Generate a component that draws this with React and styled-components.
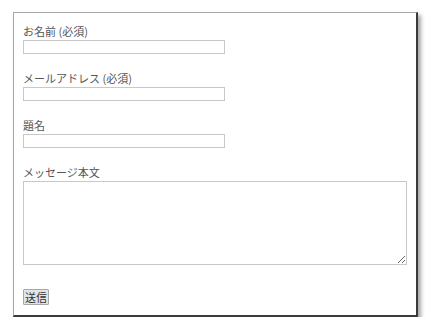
import styled, { createGlobalStyle } from "styled-components"

const Global = createGlobalStyle`
    html, body {
        margin: 0;
        padding: 0;
        background: #ffffff;
    }
`

export default function App() {
    return (
        <>
            <Global/>
            <Panel>
                <Field>
                    <Label>お名前 (必須)</Label>
                    <Input type="text"/>
                </Field>
                <Field>
                    <Label>メールアドレス (必須)</Label>
                    <Input type="text"/>
                </Field>
                <Field>
                    <Label>題名</Label>
                    <Input type="text"/>
                </Field>
                <Field>
                    <Label>メッセージ本文</Label>
                    <TextArea/>
                </Field>
                <Submit>送信</Submit>
            </Panel>
        </>
    )
}

const Panel = styled.form`
    box-sizing: border-box;
    margin: 12px 0 0 13px;
    width: 405px;
    height: 305px;
    padding: 11px 9px 0 9px;
    display: flex;
    flex-direction: column;
    gap: 17px;
    background: #ffffff;
    border-top: 1px solid #a8a8a8;
    border-left: 1px solid #a8a8a8;
    border-right: 2px solid #3a3a3a;
    border-bottom: 2px solid #3a3a3a;
    box-shadow: 3px 3px 4px rgba(0,0,0,0.35);
    font-family: "Noto Sans CJK JP", "Noto Sans", sans-serif;
`

const Field = styled.div`
    display: flex;
    flex-direction: column;
    gap: 2px;
`

const Label = styled.label`
    font-size: 11px;
    line-height: 14px;
    color: #555555;
`

const Input = styled.input`
    box-sizing: border-box;
    width: 202px;
    height: 14px;
    margin: 0;
    padding: 0;
    border: 1px solid #c8c8c8;
    background: #ffffff;
    outline: none;
`

const TextArea = styled.textarea`
    box-sizing: border-box;
    width: 384px;
    height: 84px;
    margin: 0;
    padding: 0;
    border: 1px solid #c8c8c8;
    background: #ffffff;
    outline: none;
`

const Submit = styled.button`
    align-self: flex-start;
    margin-top: 7px;
    box-sizing: border-box;
    height: 16px;
    padding: 0 1px;
    font-family: "Noto Sans CJK JP", sans-serif;
    font-size: 11px;
    line-height: 13px;
    color: #333333;
    background: #e4e4e4;
    border: 1px solid #a8a8a8;
    border-radius: 1px;
`
